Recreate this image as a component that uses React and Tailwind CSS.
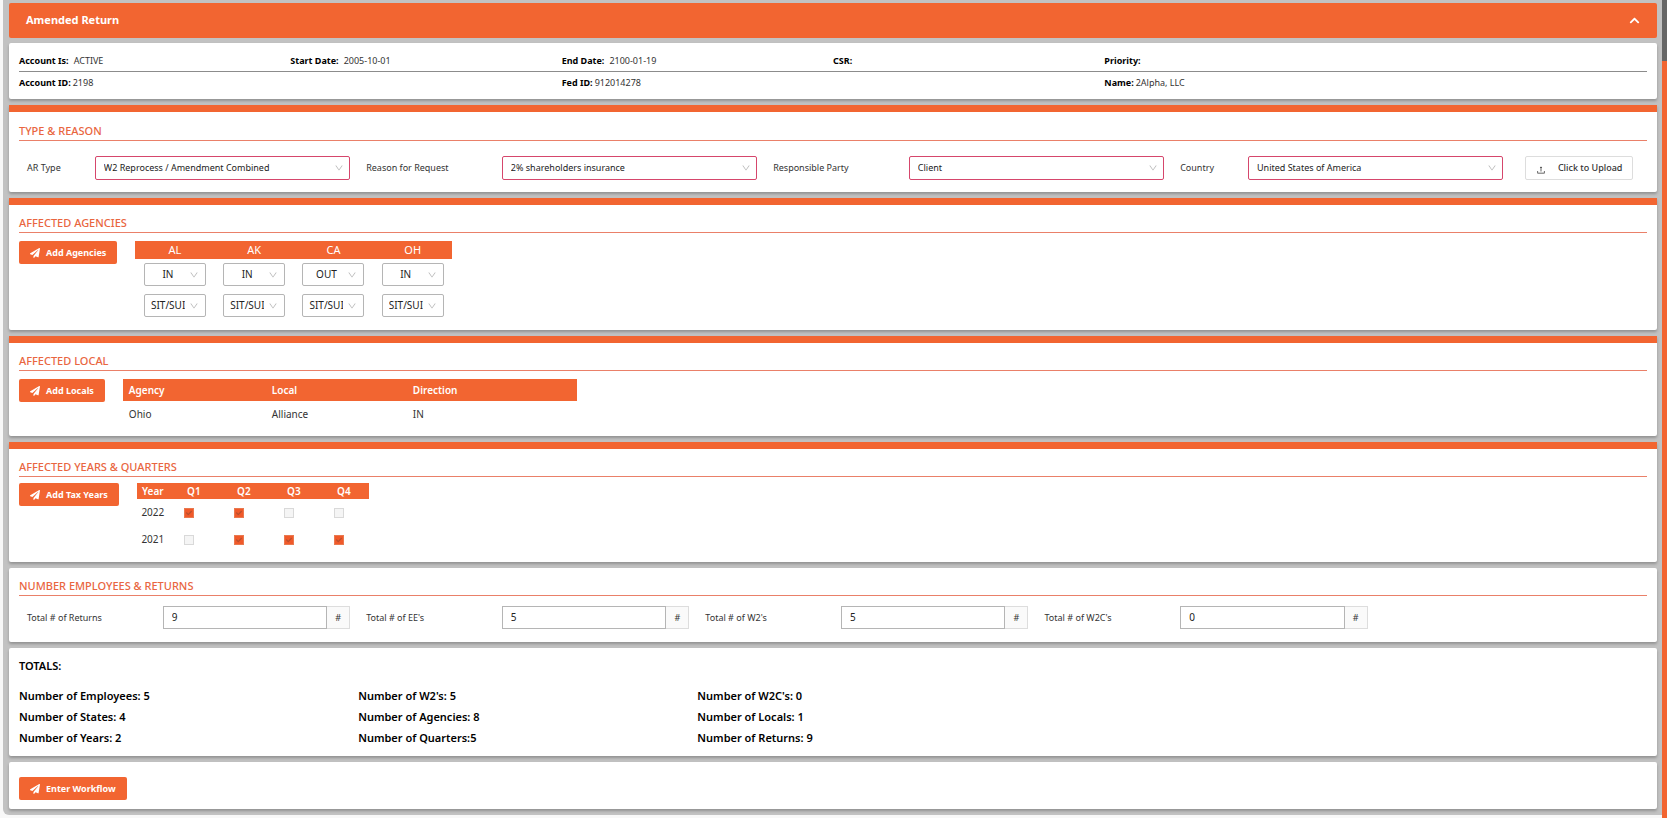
import { AiOutlineDown, AiOutlineUpload } from "react-icons/ai";
import { FaCheck, FaChevronUp, FaPaperPlane } from "react-icons/fa";

const agencies = [
  { state: "AL", direction: "IN", taxes: "SIT/SUI" },
  { state: "AK", direction: "IN", taxes: "SIT/SUI" },
  { state: "CA", direction: "OUT", taxes: "SIT/SUI" },
  { state: "OH", direction: "IN", taxes: "SIT/SUI" },
];

const locals = [{ agency: "Ohio", local: "Alliance", direction: "IN" }];

const years = [
  { year: 2022, quarters: [true, true, false, false] },
  { year: 2021, quarters: [false, true, true, true] },
];

const counts = [
  { id: "returns", label: "Total # of Returns", value: 9 },
  { id: "ees", label: "Total # of EE's", value: 5 },
  { id: "w2s", label: "Total # of W2's", value: 5 },
  { id: "w2cs", label: "Total # of W2C's", value: 0 },
];

const totals = [
  "Number of Employees: 5",
  "Number of W2's: 5",
  "Number of W2C's: 0",
  "Number of States: 4",
  "Number of Agencies: 8",
  "Number of Locals: 1",
  "Number of Years: 2",
  "Number of Quarters:5",
  "Number of Returns: 9",
];

function Card({ accent, className = "", children }) {
  return (
    <section
      className={`bg-white px-[10px] shadow-[0_2px_3px_rgba(0,0,0,0.25)] ${accent ? "rounded-b-xs border-t-[7px] border-[#f26531]" : "rounded-xs"} ${className}`}
    >
      {children}
    </section>
  );
}

function SectionTitle({ children }) {
  return (
    <h2 className="border-b border-[#ea8069] text-[11px] leading-[18px] font-medium text-[#e9663f]">
      {children}
    </h2>
  );
}

function ActionButton({ children }) {
  return (
    <button
      type="button"
      className="flex h-[23px] shrink-0 items-center gap-[6px] rounded-xs bg-[#f26531] px-[11px] text-[9px] font-bold text-white"
    >
      <FaPaperPlane className="size-[10px]" />
      {children}
    </button>
  );
}

function Info({ label, gap, children }) {
  return (
    <div className={`col-span-4 flex ${gap ? "gap-[5px]" : "gap-[2px]"}`}>
      <b className="font-bold text-black">{label}</b>
      <span>{children}</span>
    </div>
  );
}

function SelectField({ id, label, value, labelSpan }) {
  return (
    <>
      <label htmlFor={id} className={`px-2 ${labelSpan}`}>
        {label}
      </label>
      <div className="relative col-span-4 mx-2">
        <select
          id={id}
          defaultValue={value}
          className="block h-6 w-full appearance-none rounded-xs border border-[#d6466c] bg-white px-2 text-[#222]"
        >
          <option>{value}</option>
        </select>
        <AiOutlineDown className="pointer-events-none absolute top-[7px] right-[6px] size-[10px] text-[#b5b5b5]" />
      </div>
    </>
  );
}

function SmallSelect({ label, value }) {
  return (
    <div className="relative mx-auto w-[62px]">
      <select
        aria-label={label}
        defaultValue={value}
        className="block h-[23px] w-full appearance-none rounded-xs border border-[#b5b5b5] bg-white pr-5 pl-[6px] text-center text-[10px] text-[#222] [text-align-last:center]"
      >
        <option>{value}</option>
      </select>
      <AiOutlineDown className="pointer-events-none absolute top-[7px] right-[7px] size-[10px] text-[#b5b5b5]" />
    </div>
  );
}

export default function App() {
  return (
    <div className="flex bg-[#f8f8f8] pl-[3px] font-['Noto_Sans','Open_Sans',sans-serif] text-[10px] text-[#333]">
      <main className="mb-[3px] flex min-w-0 flex-1 flex-col gap-[6px] rounded-bl-md bg-[#c2c2c2] pt-[3px] pr-[5px] pb-[6px] pl-[6px]">
        <header className="flex h-[35px] items-center justify-between rounded-xs bg-[#f26531] px-[17px] text-white">
          <h1 className="text-[11px] font-bold">Amended Return</h1>
          <button type="button" aria-label="Collapse">
            <FaChevronUp className="size-[11px]" />
          </button>
        </header>

        <Card className="-mt-px pt-[10px] pb-2">
          <div className="grid grid-cols-24 border-b border-[#8c8c8c] pb-[3px] text-[9px] leading-[15px]">
            <Info label="Account Is:" gap>ACTIVE</Info>
            <Info label="Start Date:" gap>2005-10-01</Info>
            <Info label="End Date:" gap>2100-01-19</Info>
            <Info label="CSR:" />
            <Info label="Priority:" />
          </div>
          <div className="grid grid-cols-24 pt-[3px] text-[9px] leading-4">
            <Info label="Account ID:">2198</Info>
            <div className="col-span-4" />
            <Info label="Fed ID:">912014278</Info>
            <div className="col-span-4" />
            <Info label="Name:">2Alpha, LLC</Info>
          </div>
        </Card>

        <Card accent className="pt-[10px] pb-3">
          <SectionTitle>TYPE &amp; REASON</SectionTitle>
          <div className="mt-[15px] grid grid-cols-24 items-center text-[9px]">
            <SelectField id="ar-type" label="AR Type" value="W2 Reprocess / Amendment Combined" labelSpan="col-span-1" />
            <SelectField id="reason" label="Reason for Request" value="2% shareholders insurance" labelSpan="col-span-2" />
            <SelectField id="party" label="Responsible Party" value="Client" labelSpan="col-span-2" />
            <SelectField id="country" label="Country" value="United States of America" labelSpan="col-span-1" />
            <button
              type="button"
              className="col-span-2 flex h-6 items-center gap-3 justify-self-center rounded-xs border border-[#ddd] px-[10px] font-medium whitespace-nowrap"
            >
              <AiOutlineUpload className="mt-1 size-[10px]" />
              Click to Upload
            </button>
          </div>
        </Card>

        <Card accent className="pt-[9px] pb-[13px]">
          <SectionTitle>AFFECTED AGENCIES</SectionTitle>
          <div className="mt-2 flex items-start gap-[18px]">
            <ActionButton>Add Agencies</ActionButton>
            <table className="w-[317px] table-fixed">
              <thead>
                <tr className="h-[18px] bg-[#f26531] text-[11px] leading-[18px] text-white">
                  {agencies.map((a) => (
                    <th key={a.state} className="p-0 font-normal">{a.state}</th>
                  ))}
                </tr>
              </thead>
              <tbody>
                <tr>
                  {agencies.map((a) => (
                    <td key={a.state} className="pt-1 pb-2">
                      <SmallSelect label={`${a.state} direction`} value={a.direction} />
                    </td>
                  ))}
                </tr>
                <tr>
                  {agencies.map((a) => (
                    <td key={a.state} className="p-0">
                      <SmallSelect label={`${a.state} taxes`} value={a.taxes} />
                    </td>
                  ))}
                </tr>
              </tbody>
            </table>
          </div>
        </Card>

        <Card accent className="pt-[9px] pb-[9px]">
          <SectionTitle>AFFECTED LOCAL</SectionTitle>
          <div className="mt-2 flex items-start gap-[18px]">
            <ActionButton>Add Locals</ActionButton>
            <table className="w-[454px] table-fixed text-left">
              <thead>
                <tr className="h-[22px] bg-[#f26531] text-white">
                  <th className="w-[143px] p-0 pl-[6px] font-semibold">Agency</th>
                  <th className="w-[141px] p-0 pl-[6px] font-semibold">Local</th>
                  <th className="p-0 pl-[6px] font-semibold">Direction</th>
                </tr>
              </thead>
              <tbody>
                {locals.map((l) => (
                  <tr key={l.local} className="h-[26px]">
                    <td className="p-0 pl-[6px]">{l.agency}</td>
                    <td className="p-0 pl-[6px]">{l.local}</td>
                    <td className="p-0 pl-[6px]">{l.direction}</td>
                  </tr>
                ))}
              </tbody>
            </table>
          </div>
        </Card>

        <Card accent className="pt-[9px] pb-[9px]">
          <SectionTitle>AFFECTED YEARS &amp; QUARTERS</SectionTitle>
          <div className="mt-[6px] flex items-start gap-[18px]">
            <ActionButton>Add Tax Years</ActionButton>
            <table className="w-[232px] table-fixed text-center">
              <thead>
                <tr className="h-4 bg-[#f26531] leading-4 text-white">
                  <th className="w-8 p-0 font-semibold">Year</th>
                  {["Q1", "Q2", "Q3", "Q4"].map((q) => (
                    <th key={q} className="p-0 font-semibold">{q}</th>
                  ))}
                </tr>
              </thead>
              <tbody>
                {years.map((y) => (
                  <tr key={y.year} className="h-[27px]">
                    <td className="p-0">{y.year}</td>
                    {y.quarters.map((checked, i) => (
                      <td key={i} className="p-0 pr-[10px]">
                        <div className="relative mx-auto size-[10px]">
                          <input
                            type="checkbox"
                            aria-label={`${y.year} Q${i + 1}`}
                            defaultChecked={checked}
                            className="peer block size-[10px] appearance-none border border-[#d9d9d9] bg-[#f5f5f5] checked:border-[#e9794f] checked:bg-[#f0592a]"
                          />
                          <FaCheck className="pointer-events-none absolute top-[2px] left-[2px] hidden size-[6px] text-[#b5502f] peer-checked:block" />
                        </div>
                      </td>
                    ))}
                  </tr>
                ))}
              </tbody>
            </table>
          </div>
        </Card>

        <Card className="pt-[9px] pb-[13px]">
          <SectionTitle>NUMBER EMPLOYEES &amp; RETURNS</SectionTitle>
          <div className="mt-[10px] grid grid-cols-24 items-center text-[9px]">
            {counts.map((c) => (
              <div key={c.id} className="col-span-5 grid grid-cols-5 items-center">
                <label htmlFor={c.id} className="col-span-2 px-2">{c.label}</label>
                <div className="col-span-3 mx-2 flex h-[23px]">
                  <input
                    id={c.id}
                    type="text"
                    defaultValue={c.value}
                    className="w-0 flex-1 border border-[#b5b5b5] px-2 text-[10px] text-[#222]"
                  />
                  <span className="flex w-[23px] items-center justify-center border border-l-0 border-[#ddd] bg-[#fafafa]">
                    #
                  </span>
                </div>
              </div>
            ))}
          </div>
        </Card>

        <Card className="pt-[9px] pb-2 text-[11px] font-semibold text-black">
          <h2 className="leading-[18px]">TOTALS:</h2>
          <div className="mt-[10px] grid grid-cols-24 leading-[21px]">
            {totals.map((t, i) => (
              <div key={t} className={i % 3 === 2 ? "col-span-14" : "col-span-5"}>{t}</div>
            ))}
          </div>
        </Card>

        <Card className="pt-[15px] pb-[9px]">
          <ActionButton>Enter Workflow</ActionButton>
        </Card>
      </main>

      <div className="w-[5px] shrink-0 bg-[#f26531]">
        <div className="h-[61px] bg-[#666]" />
      </div>
    </div>
  );
}
